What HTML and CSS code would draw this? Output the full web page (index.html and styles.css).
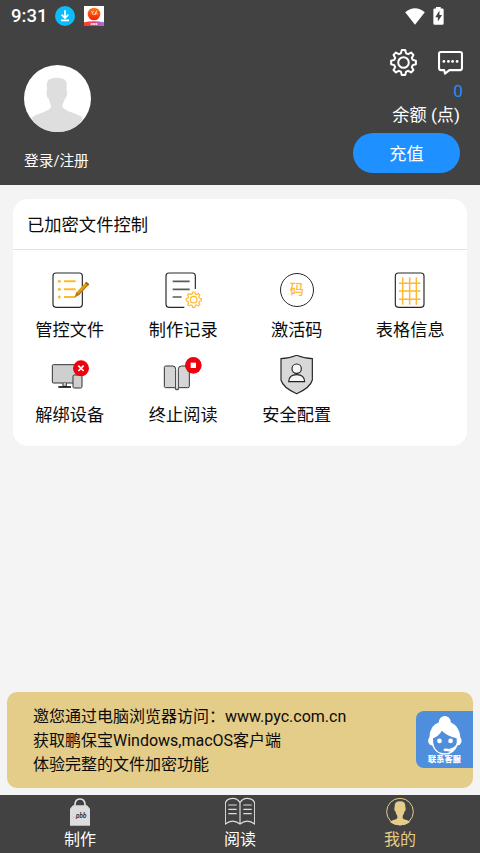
FILE: index.html
```html
<!DOCTYPE html>
<html lang="zh-CN">
<head>
<meta charset="utf-8">
<meta name="viewport" content="width=device-width">
<title>我的</title>
<link rel="stylesheet" href="styles.css">
</head>
<body>
<svg class="defs" aria-hidden="true">
  <symbol id="gear" viewBox="-13.5 -13.5 27 27">
    <path d="M-2.6-9.2L-1.7-12.4H1.7L2.6-9.2L4.67-8.34L7.57-9.97L9.97-7.57L8.34-4.67L9.2-2.6L12.4-1.7V1.7L9.2 2.6L8.34 4.67L9.97 7.57L7.57 9.97L4.67 8.34L2.6 9.2L1.7 12.4H-1.7L-2.6 9.2L-4.67 8.34L-7.57 9.97L-9.97 7.57L-8.34 4.67L-9.2 2.6L-12.4 1.7V-1.7L-9.2-2.6L-8.34-4.67L-9.97-7.57L-7.57-9.97L-4.67-8.34Z"/>
    <circle r="5.3"/>
  </symbol>
</svg>
<header class="top">
  <div class="status">
    <span class="clock">9:31</span>
    <svg class="download" viewBox="0 0 60 60"><circle cx="30" cy="30" r="30" fill="#0cbcfb"/><path d="M30 13V34M20 26L30 36L40 26M18 43H42" fill="none" stroke="#fff" stroke-width="5"/></svg>
    <svg class="app" viewBox="0 0 60 60"><defs><linearGradient id="sun" x2="0" y2="1"><stop stop-color="#ff7a10"/><stop offset="1" stop-color="#f02208"/></linearGradient><linearGradient id="ribbon"><stop stop-color="#ff4020"/><stop offset=".5" stop-color="#e93b6c"/><stop offset="1" stop-color="#8b7cf6"/></linearGradient></defs><path fill="#fff" d="M0 0H60V60H0Z"/><circle cx="30" cy="24" r="19" fill="url(#sun)"/><path d="M22 16L25 20L29 15M25 20L28 27M31 27L39 14M35 26V20L41 24" fill="none" stroke="#fff" stroke-width="2.2"/><path d="M0 49Q30 43 60 49V60H0Z" fill="url(#ribbon)"/><path d="M20 54H40" stroke="#fff" stroke-width="4" stroke-dasharray="6 1"/></svg>
    <svg class="wifi" viewBox="0 0 60 52"><path fill="#fff" d="M0 13Q30-12 60 13L30 51Z"/></svg>
    <svg class="battery" viewBox="0 0 34 56"><path fill="#fff" d="M9 5V0H24V5H29Q33 5 33 9V51Q33 55 29 55H5Q1 55 1 51V9Q1 5 5 5Z"/><path fill="#424242" d="M20 11L7 32H15V45L28 25H20Z"/></svg>
  </div>
  <div class="profile">
    <div class="account">
      <svg class="avatar" viewBox="0 0 200 200"><circle cx="100" cy="100" r="100" fill="#fff"/><path fill="#dedede" d="M68 56Q69 38 98 38Q127 38 128 56L127 75Q131 79 128 90Q126 99 122 101Q119 112 115 118Q113 125 119 130Q127 137 143 142Q165 149 175 157L170 171Q143 200 100 200Q57 200 30 171L23 157Q35 148 57 141Q72 136 79 129Q83 124 79 117Q76 111 74 101Q69 98 68 90Q66 78 69 75Z"/></svg>
      <span class="login">登录/注册</span>
    </div>
    <div class="wallet">
      <div class="tools">
        <svg class="settings"><use href="#gear"/></svg>
        <svg class="message" viewBox="0 0 72 69"><path d="M8 3H64Q69 3 69 8V49Q69 55 64 55H33L20 65L18 55H8Q3 55 3 49V8Q3 3 8 3Z" fill="none" stroke="#fff" stroke-width="6" stroke-linejoin="round"/><g fill="#fff"><circle cx="17" cy="30" r="4"/><circle cx="30" cy="30" r="4"/><circle cx="42" cy="30" r="4"/><circle cx="55" cy="30" r="4"/></g></svg>
      </div>
      <span class="amount">0</span>
      <span class="unit">余额 (点)</span>
      <button class="recharge">充值</button>
    </div>
  </div>
</header>
<main>
  <section class="card">
    <h1>已加密文件控制</h1>
    <div class="grid">
      <div class="item">
        <svg viewBox="14 0 150 120"><rect x="38" y="9" width="88" height="103" rx="9" fill="none" stroke="#282828" stroke-width="3.5"/><g stroke="#fdb932" stroke-width="6"><path d="M71 34H106M71 58H106M71 81H106"/></g><g fill="#fdb932"><circle cx="57" cy="34" r="4.5"/><circle cx="57" cy="58" r="4.5"/><circle cx="57" cy="81" r="4.5"/></g><path d="M103 82L109 66L138 35L147 43L118 74Z" fill="#e09a1b"/><path d="M103 82L109 66L118 74Z" fill="#b97816"/><path d="M138 35L147 43L143 47L134 39Z" fill="#9b6518"/><path d="M116 72L145 42" stroke="#ad7011" stroke-width="3"/></svg>
        <span>管控文件</span>
      </div>
      <div class="item">
        <svg viewBox="15 0 150 120"><path d="M127 57V18Q127 9 118 9H48Q39 9 39 18V103Q39 112 48 112H94" fill="none" stroke="#282828" stroke-width="3.5"/><path d="M59 34H110M59 58H110M59 81H86" stroke="#5c5c5c" stroke-width="5"/><g class="mini-gear"><use href="#gear" x="97" y="64" width="50" height="50"/></g></svg>
        <span>制作记录</span>
      </div>
      <div class="item">
        <div class="code">码</div>
        <span>激活码</span>
      </div>
      <div class="item">
        <svg viewBox="3 0 150 120"><rect x="34" y="9" width="86" height="103" rx="9" fill="none" stroke="#282828" stroke-width="3.5"/><path d="M56 22V104M77 22V104M97 22V104M45 40H109M45 63H109M45 88H109" stroke="#fdb932" stroke-width="4.5"/></svg>
        <span>表格信息</span>
      </div>
      <div class="item">
        <svg viewBox="14 2 150 120"><g fill="#cfcfcf" stroke="#333" stroke-width="3"><rect x="36" y="31" width="84" height="55" rx="3"/><path d="M68 86V96H78V86"/><rect x="98" y="62" width="27" height="39" rx="4"/></g><path d="M54 98H92" stroke="#111" stroke-width="5"/><circle cx="122" cy="42" r="24" fill="#ee000c"/><path d="M114 34L130 50M130 34L114 50" stroke="#fff" stroke-width="5"/></svg>
        <span>解绑设备</span>
      </div>
      <div class="item">
        <svg viewBox="15 0 150 120"><g fill="#d5d5d5" stroke="#333" stroke-width="3"><path d="M38 33H60Q68 33 68 43V98H38Q34 98 34 94V38Q34 33 38 33ZM76 98V43Q76 33 86 33H109V94Q109 98 104 98Z"/><path d="M68 98V104H76V98"/></g><circle cx="121" cy="31" r="25" fill="#ee000c"/><path fill="#fff" d="M113 23H129V39H113Z"/></svg>
        <span>终止阅读</span>
      </div>
      <div class="item">
        <svg viewBox="1 0 150 120"><path d="M75 1Q100 11 122 11V75Q116 98 75 116Q34 98 28 75V11Q50 11 75 1Z" fill="#d8d8d8" stroke="#242424" stroke-width="3.5"/><g fill="#f7f7f7" stroke="#242424" stroke-width="3.5"><circle cx="75" cy="41" r="14"/><path d="M51 80Q52 59 75 59Q98 59 99 80Z"/></g></svg>
        <span>安全配置</span>
      </div>
    </div>
  </section>
  <aside class="notice">
    <p>邀您通过电脑浏览器访问：www.pyc.com.cn</p>
    <p>获取鹏保宝Windows,macOS客户端</p>
    <p>体验完整的文件加密功能</p>
    <div class="service">
      <svg viewBox="0 0 104 116"><path fill="#fff" d="M35 19C37-6 69-6 71 19C90 27 98 45 99 63Q104 69 102 79Q98 88 91 87Q81 115 53 115Q25 115 15 87Q8 88 4 79Q2 69 7 63Q8 45 16 33Q23 22 35 19Z"/><path fill="#4f8edc" d="M18 66Q36 60 44 44Q60 61 88 66Q90 83 84 92Q76 100 62 101L60 105L70 106Q62 111 53 111Q29 111 21 90Q17 78 18 66Z"/><g fill="#fff"><circle cx="37" cy="74" r="7"/><circle cx="70" cy="74" r="7"/></g><path d="M90 84Q80 99 58 101" fill="none" stroke="#fff" stroke-width="3.5"/><ellipse cx="56" cy="101" rx="7" ry="4" fill="#fff"/></svg>
      <span>联系客服</span>
    </div>
  </aside>
</main>
<nav class="tabs">
  <div class="tab">
    <svg viewBox="0 0 90 90"><path d="M30 36V22Q31 6 45 6Q59 6 60 22V36" fill="none" stroke="#e2e2e2" stroke-width="5"/><path d="M24 25H66L75 35V86H15V35Z" fill="#ddd"/><text class="lock-text" x="33" y="63">pbb</text><path d="M24 61H26" stroke="#777" stroke-width="2"/></svg>
    <span>制作</span>
  </div>
  <div class="tab">
    <svg viewBox="0 0 90 90"><path d="M45 17Q37 3 22 4Q5 5 1 18V81Q23 64 45 81Q67 64 89 81V18Q85 5 68 4Q53 3 45 17ZM45 17V81M10 24H35M10 37H35M10 50H35M55 24H80M55 37H80M55 50H80" fill="none" stroke="#dedede" stroke-width="3.5"/></svg>
    <span>阅读</span>
  </div>
  <div class="tab active">
    <svg viewBox="0 0 90 90"><circle cx="45" cy="44" r="40" fill="none" stroke="#e4cc89" stroke-width="3"/><path fill="#e4cc89" d="M29 29Q28 13 45 13Q62 13 61 29Q64 41 58 44Q57 53 53 56V63Q54 67 65 69Q74 72 75 75Q62 85 45 85Q28 85 15 75Q17 72 25 69Q36 67 37 63V56Q33 53 32 44Q26 41 29 29Z"/></svg>
    <span>我的</span>
  </div>
</nav>
</body>
</html>
```
FILE: styles.css
```css
* { box-sizing: border-box; }
body {
  margin: 0;
  width: 480px;
  height: 853px;
  overflow: hidden;
  display: flex;
  flex-direction: column;
  background: #f4f4f4;
  color: #0b0b0b;
  font-family: Roboto, "Noto Sans CJK SC", sans-serif;
}
svg { display: block; flex: none; }
.defs { display: none; }
.top { height: 185px; background: #424242; color: #fff; }
.status { display: flex; align-items: center; height: 32px; padding: 0 36px 0 11px; }
.clock { width: 44px; font-size: 18.5px; font-weight: 500; line-height: 32px; }
.download { width: 20px; height: 20px; }
.app { width: 20px; height: 20px; margin-left: 9px; }
.wifi { width: 20px; height: 17px; margin-left: auto; }
.battery { width: 11px; height: 18px; margin-left: 8px; }
.profile { display: flex; justify-content: space-between; padding: 0 20px 0 24px; }
.account { padding-top: 33px; }
.avatar { width: 67px; height: 67px; }
.login { display: block; margin-top: 19px; font-size: 14.7px; line-height: 20px; }
.wallet { display: flex; flex-direction: column; align-items: flex-end; padding-top: 17px; }
.tools { display: flex; align-items: center; gap: 21px; margin-right: -3px; }
.settings { width: 27px; height: 27px; fill: none; stroke: #fff; stroke-width: 2; stroke-linejoin: round; }
.message { width: 25px; height: 24px; }
.amount { margin: 5px -3px 0 0; color: #1e90ff; font-size: 17.2px; line-height: 20px; }
.unit { margin-top: 4px; font-size: 17.2px; line-height: 20px; }
.recharge {
  width: 107px;
  height: 40px;
  margin-top: 8px;
  padding: 0 0 2px;
  border: 0;
  border-radius: 20px;
  background: #1e90ff;
  color: #fff;
  font: inherit;
  font-size: 17.2px;
}
main { flex: 1; display: flex; flex-direction: column; justify-content: space-between; padding: 14px 7px 7px; }
.card { height: 247px; margin: 0 6px; border-radius: 15px; background: #fff; }
h1 {
  height: 51px;
  margin: 0;
  padding-left: 14px;
  border-bottom: 1px solid #e2e2e2;
  font-size: 17.3px;
  font-weight: 400;
  line-height: 52px;
}
.grid { display: grid; grid-template-columns: repeat(4, 1fr); grid-auto-rows: 85px; padding-top: 20px; }
.item { display: flex; flex-direction: column; align-items: center; font-size: 17.2px; line-height: 24px; }
.item svg { width: 50px; height: 40px; margin-bottom: 8px; }
.mini-gear { fill: none; stroke: #fdb932; stroke-width: 1.9; }
.code {
  width: 34px;
  height: 34px;
  margin: 3px 0 11px;
  border: 1px solid #282828;
  border-radius: 50%;
  color: #fdb932;
  font-size: 14px;
  font-weight: 500;
  line-height: 31px;
  text-align: center;
}
.notice { position: relative; height: 96px; padding: 13px 26px; border-radius: 10px; background: #e4cc89; }
.notice p { margin: 0; font-size: 16px; line-height: 24px; white-space: nowrap; }
.service {
  position: absolute;
  top: 19px;
  right: 0;
  display: flex;
  flex-direction: column;
  align-items: center;
  width: 57px;
  height: 57px;
  padding-top: 5px;
  border-radius: 8px 0 0 8px;
  background: #4f8edc;
  color: #fff;
}
.service svg { width: 35px; height: 39px; }
.service span { font-size: 8.2px; font-weight: 900; line-height: 9px; }
.tabs { display: flex; height: 58px; background: #424242; color: #fff; }
.tab { flex: 1; display: flex; flex-direction: column; align-items: center; padding-top: 2px; font-size: 16px; line-height: 24px; }
.tab svg { width: 30px; height: 30px; margin-bottom: 1px; }
.active { color: #e4cc89; }
.lock-text { fill: #333; font: italic 700 19px Roboto, sans-serif; }
```
